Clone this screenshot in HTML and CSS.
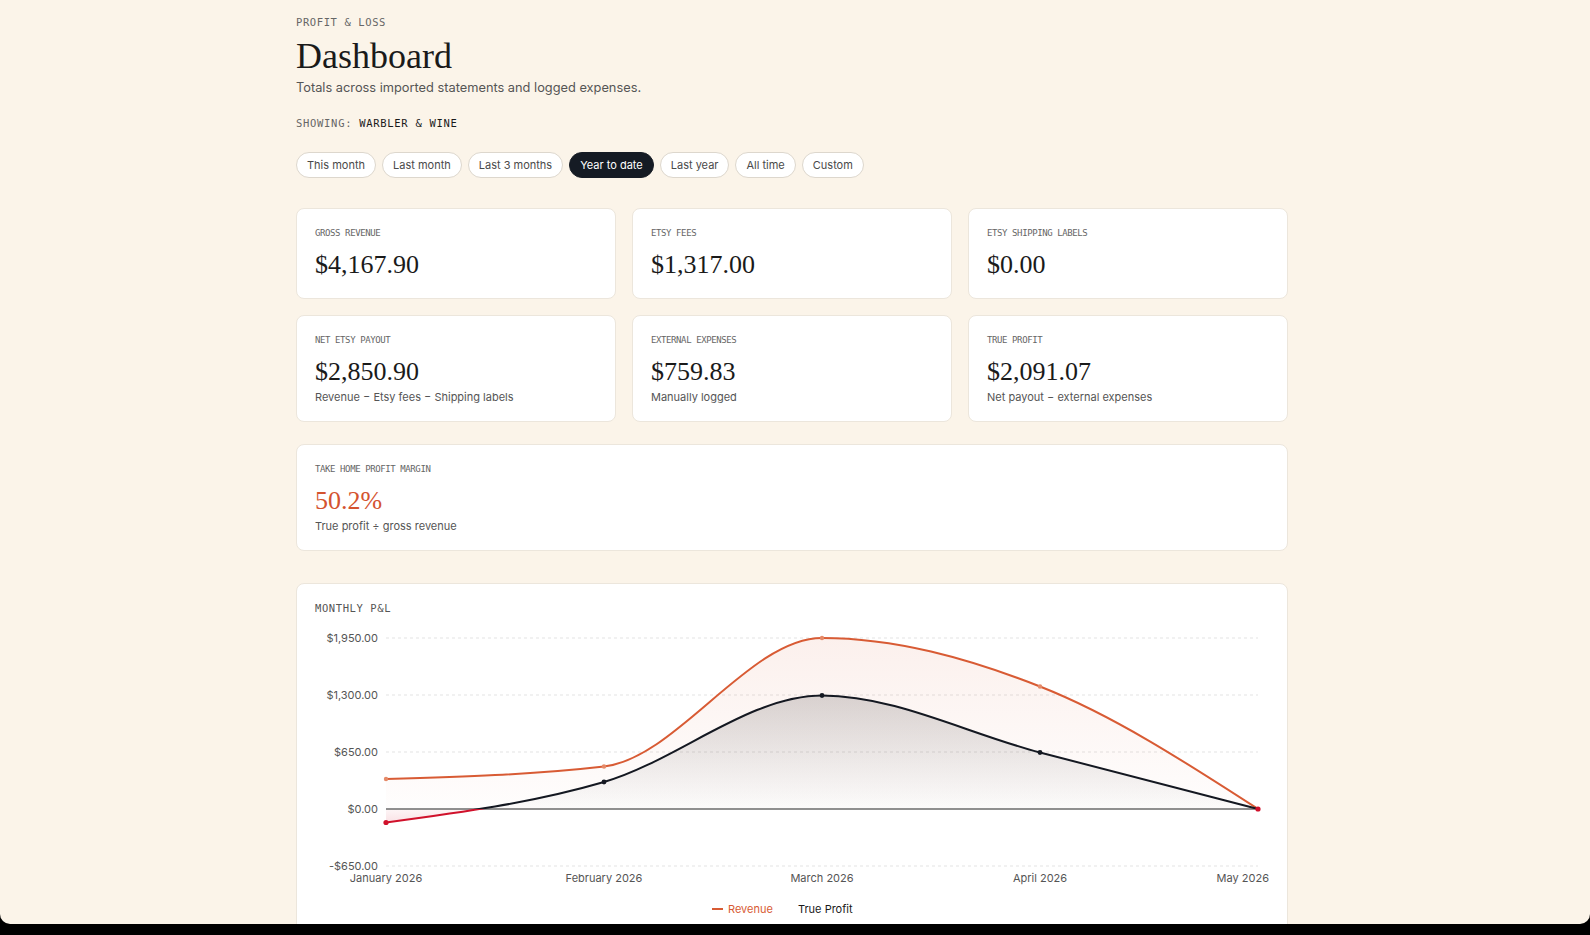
FILE: index.html
```html
<!DOCTYPE html>
<html lang="en">
<head>
    <meta charset="UTF-8">
    <meta name="viewport" content="width=device-width, initial-scale=1.0">
    <title>Dashboard</title>
    <link rel="stylesheet" href="styles.css">
</head>
<body>
    <div class="page">
        <p class="eyebrow">PROFIT &amp; LOSS</p>
        <h1>Dashboard</h1>
        <p class="subtitle">Totals across imported statements and logged expenses.</p>
        <p class="showing">SHOWING: <strong>WARBLER &amp; WINE</strong></p>

        <div class="ranges">
            <button class="pill">This month</button>
            <button class="pill">Last month</button>
            <button class="pill">Last 3 months</button>
            <button class="pill active">Year to date</button>
            <button class="pill">Last year</button>
            <button class="pill">All time</button>
            <button class="pill">Custom</button>
        </div>

        <div class="stats">
            <div class="card">
                <div class="label">GROSS REVENUE</div>
                <div class="value">$4,167.90</div>
            </div>
            <div class="card">
                <div class="label">ETSY FEES</div>
                <div class="value">$1,317.00</div>
            </div>
            <div class="card">
                <div class="label">ETSY SHIPPING LABELS</div>
                <div class="value">$0.00</div>
            </div>
            <div class="card">
                <div class="label">NET ETSY PAYOUT</div>
                <div class="value">$2,850.90</div>
                <div class="note">Revenue − Etsy fees − Shipping labels</div>
            </div>
            <div class="card">
                <div class="label">EXTERNAL EXPENSES</div>
                <div class="value">$759.83</div>
                <div class="note">Manually logged</div>
            </div>
            <div class="card">
                <div class="label">TRUE PROFIT</div>
                <div class="value">$2,091.07</div>
                <div class="note">Net payout − external expenses</div>
            </div>
        </div>

        <div class="card margin-card">
            <div class="label">TAKE HOME PROFIT MARGIN</div>
            <div class="value accent">50.2%</div>
            <div class="note">True profit ÷ gross revenue</div>
        </div>

        <div class="card chart-card">
            <div class="chart-title">MONTHLY P&amp;L</div>
            <svg class="chart" width="954" height="300" viewBox="0 0 954 300">
                <defs>
                    <linearGradient id="revFill" gradientUnits="userSpaceOnUse" x1="0" y1="13" x2="0" y2="184">
                        <stop offset="0" stop-color="#d85b34" stop-opacity="0.09"/>
                        <stop offset="1" stop-color="#d85b34" stop-opacity="0.01"/>
                    </linearGradient>
                    <linearGradient id="profitFill" gradientUnits="userSpaceOnUse" x1="0" y1="70" x2="0" y2="241">
                        <stop offset="0" stop-color="#1a1416" stop-opacity="0.16"/>
                        <stop offset="0.667" stop-color="#1a1416" stop-opacity="0.01"/>
                        <stop offset="0.667" stop-color="#d0112b" stop-opacity="0.04"/>
                        <stop offset="0.78" stop-color="#d0112b" stop-opacity="0.16"/>
                    </linearGradient>
                    <linearGradient id="profitStroke" gradientUnits="userSpaceOnUse" x1="0" y1="0" x2="0" y2="241">
                        <stop offset="0.7635" stop-color="#141821"/>
                        <stop offset="0.7635" stop-color="#d0112b"/>
                    </linearGradient>
                </defs>

                <g class="grid">
                    <line x1="71" y1="13" x2="943" y2="13"/>
                    <line x1="71" y1="70" x2="943" y2="70"/>
                    <line x1="71" y1="127" x2="943" y2="127"/>
                    <line x1="71" y1="241" x2="943" y2="241"/>
                </g>

                <g class="y-axis">
                    <text x="63" y="17">$1,950.00</text>
                    <text x="63" y="74">$1,300.00</text>
                    <text x="63" y="131">$650.00</text>
                    <text x="63" y="188">$0.00</text>
                    <text x="63" y="245">-$650.00</text>
                </g>

                <path d="M71,154 C143.67,151.92 216.33,149.83 289,141.5 C361.67,133.17 434.33,13 507,13 C579.67,13 652.33,33 725,61.5 C797.67,90 870.33,137 943,184 L71,184 Z" fill="url(#revFill)"/>
                <path d="M71,197.5 C143.67,187.83 216.33,178.17 289,157 C361.67,135.83 434.33,70.5 507,70.5 C579.67,70.5 652.33,108.58 725,127.5 C797.67,146.42 870.33,165.21 943,184 L71,184 Z" fill="url(#profitFill)"/>

                <line class="zero" x1="71" y1="184" x2="943" y2="184"/>

                <path class="rev-line" d="M71,154 C143.67,151.92 216.33,149.83 289,141.5 C361.67,133.17 434.33,13 507,13 C579.67,13 652.33,33 725,61.5 C797.67,90 870.33,137 943,184"/>
                <path class="profit-line" d="M71,197.5 C143.67,187.83 216.33,178.17 289,157 C361.67,135.83 434.33,70.5 507,70.5 C579.67,70.5 652.33,108.58 725,127.5 C797.67,146.42 870.33,165.21 943,184" stroke="url(#profitStroke)"/>

                <g class="rev-dots">
                    <circle cx="71" cy="154" r="2.2"/>
                    <circle cx="289" cy="141.5" r="2.2"/>
                    <circle cx="507" cy="13" r="2.2"/>
                    <circle cx="725" cy="61.5" r="2.2"/>
                </g>
                <g class="profit-dots">
                    <circle class="neg" cx="71" cy="197.5" r="2.6"/>
                    <circle cx="289" cy="157" r="2.4"/>
                    <circle cx="507" cy="70.5" r="2.4"/>
                    <circle cx="725" cy="127.5" r="2.4"/>
                    <circle class="neg" cx="943" cy="184" r="2.6"/>
                </g>

                <g class="x-axis">
                    <text x="71" y="257">January 2026</text>
                    <text x="289" y="257">February 2026</text>
                    <text x="507" y="257">March 2026</text>
                    <text x="725" y="257">April 2026</text>
                    <text x="954" y="257" class="end">May 2026</text>
                </g>

                <g class="legend">
                    <line x1="397" y1="284" x2="408" y2="284"/>
                    <text x="413" y="288">Revenue</text>
                    <text x="483" y="288" class="profit">True Profit</text>
                </g>
            </svg>
        </div>
    </div>
    <div class="screen-edge"></div>
</body>
</html>
```

FILE: styles.css
```css
body {
    margin: 0;
    padding: 0;
    background-color: #fbf4e9;
    font-family: Inter, "Noto Sans", sans-serif;
    color: #1b1b1b;
}
.page {
    max-width: 992px;
    margin: 0 auto;
    padding: 14px 6px 0 0;
}
.eyebrow, .showing, .label, .chart-title {
    font-family: "DejaVu Sans Mono", "Liberation Mono", monospace;
}
.eyebrow {
    margin: 0;
    font-size: 10.5px;
    line-height: 16px;
    letter-spacing: 0.6px;
    color: #666;
}
h1 {
    margin: 4px 0 0;
    font-family: "Liberation Serif", "DejaVu Serif", serif;
    font-weight: normal;
    font-size: 36px;
    line-height: 44px;
    color: #1a1a1a;
}
.subtitle {
    margin: 0;
    font-size: 12.8px;
    line-height: 20px;
    color: #555;
}
.showing {
    margin: 17px 0 0;
    font-size: 10.5px;
    line-height: 16px;
    letter-spacing: 0.7px;
    color: #666;
}
.showing strong {
    font-weight: normal;
    color: #1a1a1a;
}
.ranges {
    display: flex;
    gap: 6px;
    margin-top: 21px;
}
.pill {
    padding: 4px 10px;
    border: 1px solid #ddd7cd;
    border-radius: 999px;
    background: white;
    font-family: Inter, sans-serif;
    font-size: 11px;
    line-height: 16px;
    color: #4a4a4a;
}
.pill.active {
    background: #151b24;
    border-color: #151b24;
    color: white;
}
.stats {
    display: grid;
    grid-template-columns: repeat(3, 1fr);
    gap: 16px;
    margin-top: 30px;
}
.card {
    padding: 17px 18px 16px;
    background: white;
    border: 1px solid #ece6dc;
    border-radius: 8px;
}
.label {
    font-size: 9px;
    line-height: 14px;
    letter-spacing: -0.4px;
    color: #666;
}
.value {
    margin-top: 8px;
    font-family: "Liberation Serif", "DejaVu Serif", serif;
    font-size: 26px;
    line-height: 34px;
    color: #1a1a1a;
}
.value.accent {
    color: #d4532f;
}
.note {
    font-size: 11px;
    line-height: 16px;
    color: #555;
}
.margin-card {
    margin-top: 22px;
}
.chart-card {
    margin-top: 32px;
}
.chart-title {
    font-size: 10.5px;
    line-height: 14px;
    letter-spacing: 0.6px;
    color: #555;
}
.chart {
    display: block;
    margin-top: 10px;
    font-family: Inter, sans-serif;
    font-size: 11px;
}
.grid line {
    stroke: #e3e3e3;
    stroke-dasharray: 3 3;
}
.y-axis text {
    text-anchor: end;
    fill: #555;
}
.x-axis text {
    text-anchor: middle;
    fill: #555;
}
.x-axis text.end {
    text-anchor: end;
}
.zero {
    stroke: #6b6b6b;
    stroke-width: 1.5;
}
.rev-line {
    fill: none;
    stroke: #d85b34;
    stroke-width: 2;
}
.profit-line {
    fill: none;
    stroke-width: 2;
}
.rev-dots circle {
    fill: #e58a68;
}
.profit-dots circle {
    fill: #141821;
}
.profit-dots circle.neg {
    fill: #d0112b;
}
.legend line {
    stroke: #d85b34;
    stroke-width: 2;
}
.legend text {
    fill: #d85b34;
}
.legend text.profit {
    fill: #1a1a1a;
}
.screen-edge {
    position: fixed;
    left: 0;
    right: 0;
    bottom: 0;
    height: 22px;
    overflow: hidden;
    pointer-events: none;
}
.screen-edge::before {
    content: "";
    position: absolute;
    left: 0;
    right: 0;
    top: 0;
    height: 11px;
    border-radius: 0 0 10px 10px;
    box-shadow: 0 0 0 30px #000;
}
```
